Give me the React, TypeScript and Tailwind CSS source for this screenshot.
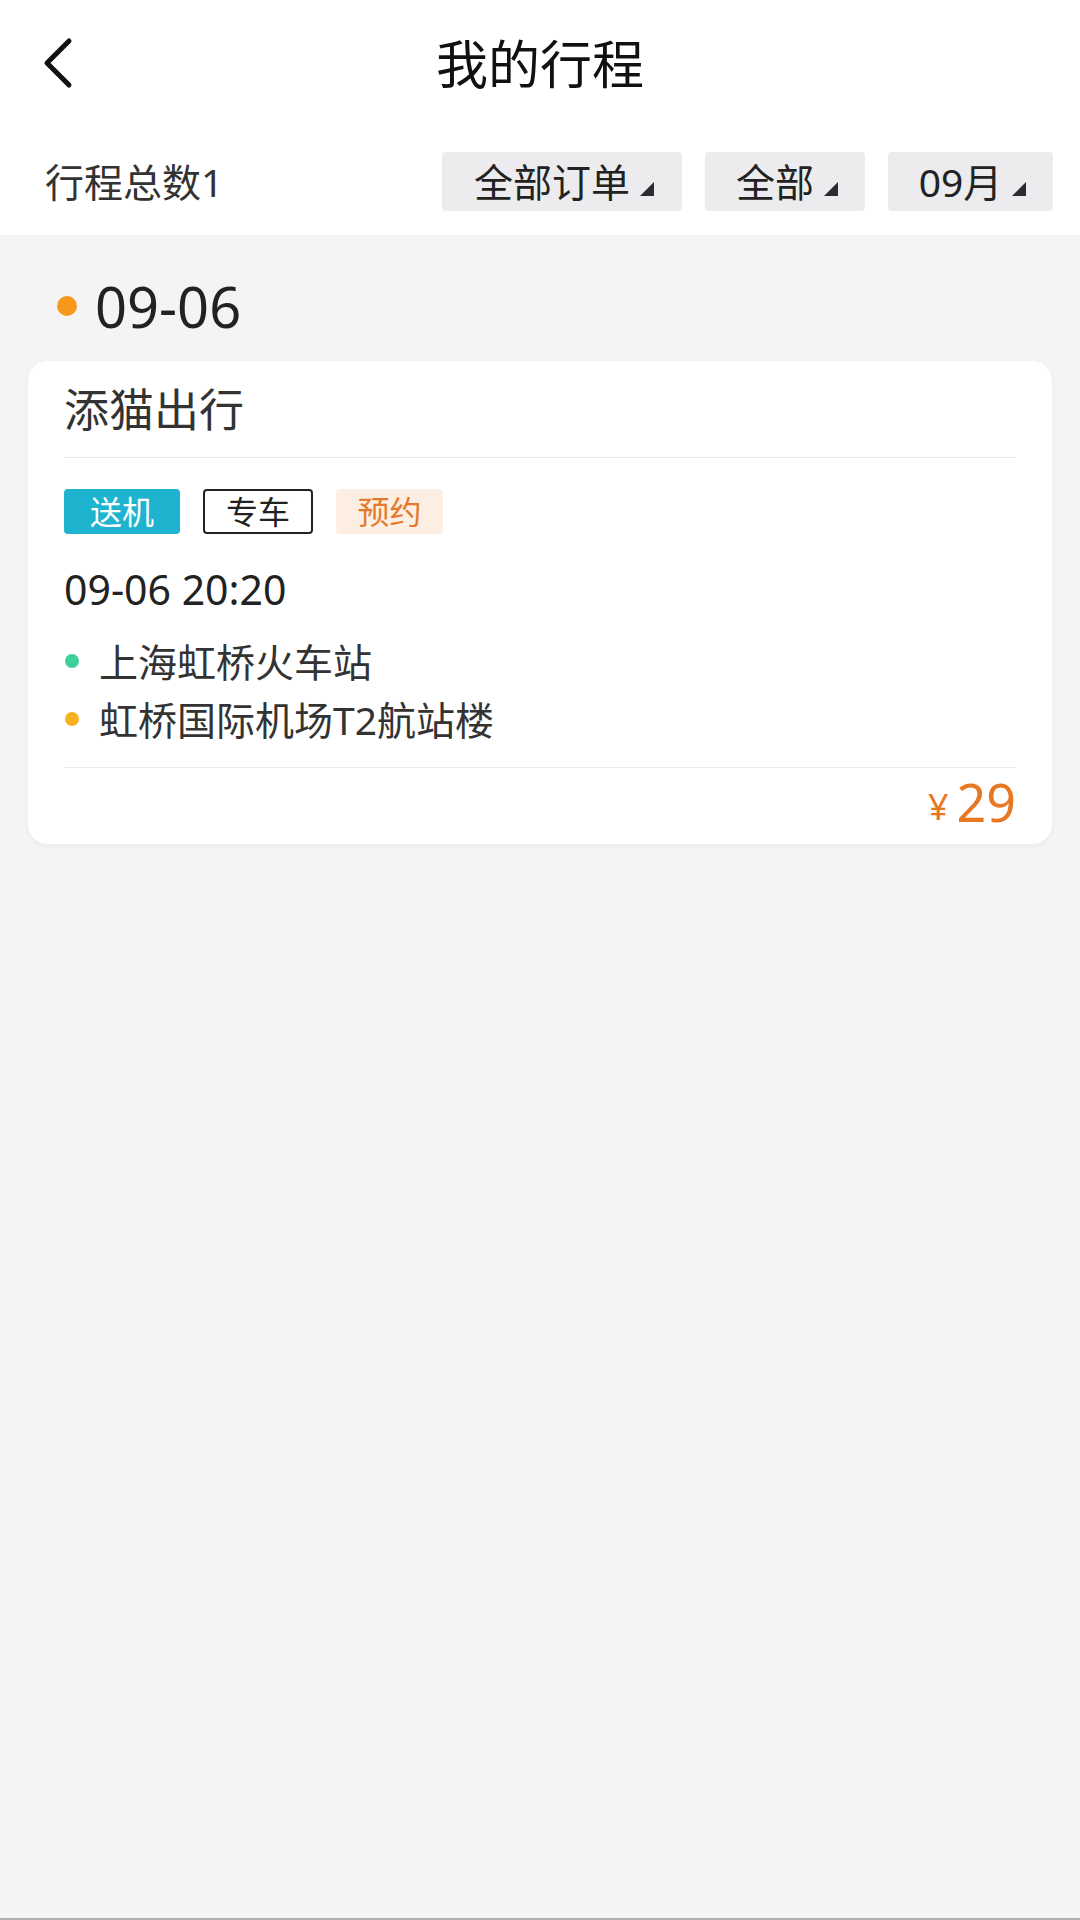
const font = { fontFamily: '"Noto Sans", "Noto Sans CJK SC", sans-serif' };

const Caret = () => (
  <svg width="14" height="14" viewBox="0 0 14 14" className="ml-[10px] mt-[14px]">
    <path d="M14 0 L14 14 L0 14 Z" fill="#2b2b33" />
  </svg>
);

const FilterButton = ({ label, width }: { label: string; width: string }) => (
  <div className={`${width} h-[59px] rounded-[4px] bg-[#ececee] flex items-center justify-center`}>
    <span className="text-[39px] leading-none text-[#222] ml-[4px]">{label}</span>
    <Caret />
  </div>
);

const Tag = ({ label, className }: { label: string; className: string }) => (
  <div className={`h-[45px] flex items-center justify-center rounded-[4px] text-[32px] leading-none ${className}`}>
    {label}
  </div>
);

export default function App() {
  return (
    <div style={font} className="w-[1080px] h-[1920px] bg-[#f4f4f4] flex flex-col border-b-2 border-[#b0b0b0]">
      <div className="bg-white">
        <div className="h-[128px] relative flex items-center justify-center">
          <svg
            width="40"
            height="52"
            viewBox="0 0 40 52"
            className="absolute left-[38px] top-[37px]"
          >
            <path d="M31 4 L9 26 L31 48" fill="none" stroke="#111" strokeWidth="5" strokeLinecap="round" strokeLinejoin="round" />
          </svg>
          <span className="text-[52px] leading-none text-[#111]">我的行程</span>
        </div>
        <div className="h-[107px] flex items-center pl-[45px] pr-[27px]">
          <span className="text-[39px] leading-none text-[#333] flex-1">行程总数1</span>
          <div className="flex gap-[23px]">
            <FilterButton label="全部订单" width="w-[240px]" />
            <FilterButton label="全部" width="w-[160px]" />
            <FilterButton label="09月" width="w-[165px]" />
          </div>
        </div>
      </div>

      <div className="h-[126px] flex items-center pl-[57px] pt-[16px]">
        <span className="w-[20px] h-[20px] rounded-full bg-[#f7981c]" />
        <span className="ml-[18px] text-[56px] leading-none text-[#222]">09-06</span>
      </div>

      <div className="mx-[28px] bg-white rounded-[20px] shadow-[0_2px_6px_rgba(0,0,0,0.04)] px-[36px]">
        <div className="h-[97px] flex items-center border-b border-[#ececec]">
          <span className="text-[45px] leading-none text-[#333]">添猫出行</span>
        </div>
        <div className="pt-[31px] flex gap-[23px]">
          <Tag label="送机" className="w-[116px] bg-[#1eb4d0] text-white" />
          <Tag label="专车" className="w-[110px] border-2 border-[#222] text-[#222]" />
          <Tag label="预约" className="w-[107px] bg-[#fdeee3] text-[#e47a2a]" />
        </div>
        <div className="h-[32px] mt-[39px] flex items-center">
          <span className="text-[41px] leading-none text-[#222]">09-06 20:20</span>
        </div>
        <div className="mt-[35px] flex flex-col gap-[16px] pb-[27px] border-b border-[#ececec]">
          <div className="h-[42px] flex items-center">
            <span className="w-[14px] h-[14px] rounded-full bg-[#3ecf9a] ml-[1px]" />
            <span className="ml-[20px] text-[39px] leading-none text-[#333]">上海虹桥火车站</span>
          </div>
          <div className="h-[42px] flex items-center">
            <span className="w-[14px] h-[14px] rounded-full bg-[#f6b120] ml-[1px]" />
            <span className="ml-[20px] text-[39px] leading-none text-[#333]">虹桥国际机场T2航站楼</span>
          </div>
        </div>
        <div className="h-[76px] flex items-center justify-end pb-[8px]">
          <span className="text-[36px] leading-none text-[#e87722] mt-[10px]">¥</span>
          <span className="ml-[8px] text-[52px] leading-none text-[#e87722]">29</span>
        </div>
      </div>
    </div>
  );
}
